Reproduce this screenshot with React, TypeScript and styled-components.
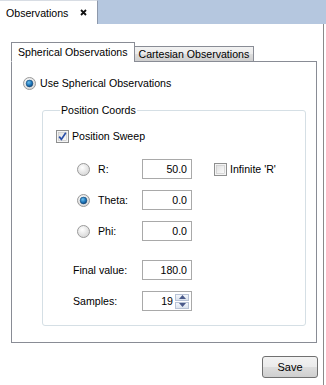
import React, { useState } from "react";
import styled, { createGlobalStyle } from "styled-components";

const GlobalStyle = createGlobalStyle`
  html, body {
    margin: 0;
    padding: 0;
    background: #ffffff;
  }
  body {
    font-family: "Liberation Sans", Arial, sans-serif;
    font-size: 10.6px;
    color: #000;
  }
`;

const RadioMark = ({ checked }: { checked?: boolean }) => (
  <svg width="13" height="13" viewBox="0 0 13 13">
    <defs>
      <radialGradient id="rbg" cx="40%" cy="35%" r="70%">
        <stop offset="0" stopColor="#ffffff" />
        <stop offset="1" stopColor="#d4d4d4" />
      </radialGradient>
      <radialGradient id="rdot" cx="40%" cy="35%" r="70%">
        <stop offset="0" stopColor="#6ec0ee" />
        <stop offset="0.6" stopColor="#1c74b8" />
        <stop offset="1" stopColor="#0c3f75" />
      </radialGradient>
    </defs>
    <circle cx="6.5" cy="6.5" r="6" fill="url(#rbg)" stroke="#9a9a9a" strokeWidth="1" />
    {checked && <circle cx="6.5" cy="6.5" r="3.4" fill="url(#rdot)" stroke="#1a4b78" strokeWidth="0.6" />}
  </svg>
);

const CheckMark = ({ checked }: { checked?: boolean }) => (
  <svg width="13" height="13" viewBox="0 0 13 13">
    <defs>
      <linearGradient id="cbg" x1="0" y1="0" x2="1" y2="1">
        <stop offset="0" stopColor="#e0e0e0" />
        <stop offset="1" stopColor="#fbfbfb" />
      </linearGradient>
    </defs>
    <rect x="0.5" y="0.5" width="12" height="12" fill="#f4f4f4" stroke="#8e8f8f" />
    <rect x="2.5" y="2.5" width="8" height="8" fill="url(#cbg)" stroke="#c4c4c4" strokeWidth="0.6" />
    {checked && (
      <path d="M3.2 6.6 L5.4 9.4 L9.8 2.8" fill="none" stroke="#2a4fa8" strokeWidth="1.7" />
    )}
  </svg>
);

const App = () => {
  const [mode, setMode] = useState("spherical");
  const [coord, setCoord] = useState("theta");
  const [sweep, setSweep] = useState(true);
  const [infinite, setInfinite] = useState(false);
  const [samples, setSamples] = useState(19);

  const coords = [
    { key: "r", label: "R:", value: "50.0" },
    { key: "theta", label: "Theta:", value: "0.0" },
    { key: "phi", label: "Phi:", value: "0.0" },
  ];

  return (
    <Window>
      <GlobalStyle />
      <TopBar>
        <DocTab>
          Observations
          <CloseIcon viewBox="0 0 7 7" width="7" height="7">
            <path d="M1 1 L6 6 M6 1 L1 6" stroke="#111" strokeWidth="1.8" />
          </CloseIcon>
        </DocTab>
      </TopBar>
      <Main>
        <TabBar>
          <InnerTab $active={mode === "spherical"} onClick={() => setMode("spherical")}>
            Spherical Observations
          </InnerTab>
          <InnerTab $active={mode === "cartesian"} onClick={() => setMode("cartesian")}>
            Cartesian Observations
          </InnerTab>
        </TabBar>
        <TabPane>
          <OptionRow onClick={() => setMode("spherical")}>
            <RadioMark checked={mode === "spherical"} />
            Use Spherical Observations
          </OptionRow>
          <GroupBox>
            <GroupTitle>Position Coords</GroupTitle>
            <SweepRow onClick={() => setSweep(!sweep)}>
              <CheckMark checked={sweep} />
              Position Sweep
            </SweepRow>
            <CoordGrid>
              {coords.map((c) => (
                <React.Fragment key={c.key}>
                  <RadioCell onClick={() => setCoord(c.key)}>
                    <RadioMark checked={coord === c.key} />
                  </RadioCell>
                  <FieldLabel>{c.label}</FieldLabel>
                  <NumberBox>{c.value}</NumberBox>
                  {c.key === "r" ? (
                    <InfiniteRow onClick={() => setInfinite(!infinite)}>
                      <CheckMark checked={infinite} />
                      Infinite 'R'
                    </InfiniteRow>
                  ) : (
                    <span />
                  )}
                </React.Fragment>
              ))}
            </CoordGrid>
            <ValueGrid>
              <FieldLabel>Final value:</FieldLabel>
              <NumberBox>180.0</NumberBox>
              <FieldLabel>Samples:</FieldLabel>
              <NumberBox $spin>
                {samples}
                <Spinner>
                  <SpinButton onClick={() => setSamples(samples + 1)}>
                    <svg width="7" height="4" viewBox="0 0 7 4">
                      <path d="M0 4 L3.5 0 L7 4 Z" fill="#4a5a8a" />
                    </svg>
                  </SpinButton>
                  <SpinButton onClick={() => setSamples(Math.max(0, samples - 1))}>
                    <svg width="7" height="4" viewBox="0 0 7 4">
                      <path d="M0 0 L3.5 4 L7 0 Z" fill="#4a5a8a" />
                    </svg>
                  </SpinButton>
                </Spinner>
              </NumberBox>
            </ValueGrid>
          </GroupBox>
        </TabPane>
        <Footer>
          <SaveButton>Save</SaveButton>
        </Footer>
      </Main>
    </Window>
  );
};

export default App;

const Window = styled.div`
  width: 326px;
  height: 385px;
  display: flex;
  flex-direction: column;
  overflow: hidden;
  background: #ffffff;
`;

const TopBar = styled.div`
  height: 24px;
  display: flex;
  background: #b5c7df;
`;

const DocTab = styled.div`
  width: 98px;
  box-sizing: border-box;
  display: flex;
  align-items: center;
  gap: 12px;
  padding-left: 6px;
  background: #ffffff;
  border-top: 1px solid #d8dde4;
  border-right: 1px solid #8d98ab;
`;

const CloseIcon = styled.svg`
  flex: none;
`;

const Main = styled.div`
  flex: 1;
  width: 324px;
  box-sizing: border-box;
  border-right: 1px solid #8a8a8a;
  padding: 18px 0 0 11px;
  display: flex;
  flex-direction: column;
`;

const TabBar = styled.div`
  display: flex;
  align-items: flex-end;
  height: 20px;
  margin-bottom: -1px;
  position: relative;
  z-index: 1;
`;

const InnerTab = styled.div<{ $active?: boolean }>`
  box-sizing: border-box;
  height: ${(p) => (p.$active ? "20px" : "16px")};
  padding: ${(p) => (p.$active ? "0 6px" : "0 4px")};
  display: flex;
  align-items: center;
  border: 1px solid #898c95;
  border-bottom: ${(p) => (p.$active ? "1px solid #ffffff" : "1px solid #898c95")};
  margin-left: ${(p) => (p.$active ? "0" : "-1px")};
  background: ${(p) =>
    p.$active ? "#ffffff" : "linear-gradient(#f2f2f2, #ebebeb 50%, #dddddd 51%, #cfcfcf)"};
  cursor: default;
`;

const TabPane = styled.div`
  width: 306px;
  box-sizing: border-box;
  border: 1px solid #898c95;
  background: #ffffff;
  padding: 14px 10px 16px 11px;
`;

const OptionRow = styled.div`
  display: flex;
  align-items: center;
  gap: 4px;
  height: 14px;
`;

const GroupBox = styled.fieldset`
  margin: 13px 0 0 19px;
  padding: 0 0 14px 13px;
  border: 1px solid #d5dfe5;
  border-radius: 3px;
  box-shadow: inset 1px 1px 0 #ffffff;
  min-width: 0;
`;

const GroupTitle = styled.legend`
  margin-left: 4px;
  padding: 0 1px;
  line-height: 14px;
`;

const SweepRow = styled.div`
  display: flex;
  align-items: center;
  gap: 3px;
  height: 14px;
  margin-top: 12px;
`;

const CoordGrid = styled.div`
  display: grid;
  grid-template-columns: 21px 44px 50px auto;
  grid-auto-rows: 20px;
  row-gap: 11px;
  align-items: center;
  margin: 16px 0 0 21px;
`;

const RadioCell = styled.div`
  display: flex;
  align-items: center;
`;

const FieldLabel = styled.span`
  white-space: nowrap;
`;

const NumberBox = styled.div<{ $spin?: boolean }>`
  box-sizing: border-box;
  height: 20px;
  width: 50px;
  border: 1px solid #a9a9a9;
  display: flex;
  align-items: center;
  justify-content: flex-end;
  padding-right: ${(p) => (p.$spin ? "2px" : "4px")};
  gap: 2px;
  background: #ffffff;
`;

const InfiniteRow = styled.div`
  display: flex;
  align-items: center;
  gap: 3px;
  margin-left: 22px;
  white-space: nowrap;
`;

const ValueGrid = styled.div`
  display: grid;
  grid-template-columns: 69px 50px;
  grid-auto-rows: 20px;
  row-gap: 11px;
  align-items: center;
  margin: 19px 0 0 17px;
`;

const Spinner = styled.div`
  display: flex;
  flex-direction: column;
  gap: 1px;
`;

const SpinButton = styled.div`
  width: 14px;
  height: 7px;
  box-sizing: border-box;
  border: 1px solid #b8c3d6;
  background: linear-gradient(#f4f7fb, #dbe3ee);
  display: flex;
  align-items: center;
  justify-content: center;
`;

const Footer = styled.div`
  display: flex;
  justify-content: flex-end;
  width: 307px;
  margin-top: 13px;
`;

const SaveButton = styled.button`
  width: 56px;
  height: 22px;
  border: 1px solid #707070;
  border-radius: 3px;
  background: linear-gradient(#f2f2f2, #ebebeb 50%, #dddddd 51%, #cfcfcf);
  font-family: "Liberation Sans", Arial, sans-serif;
  font-size: 11px;
  color: #000;
  padding: 0;
`;
